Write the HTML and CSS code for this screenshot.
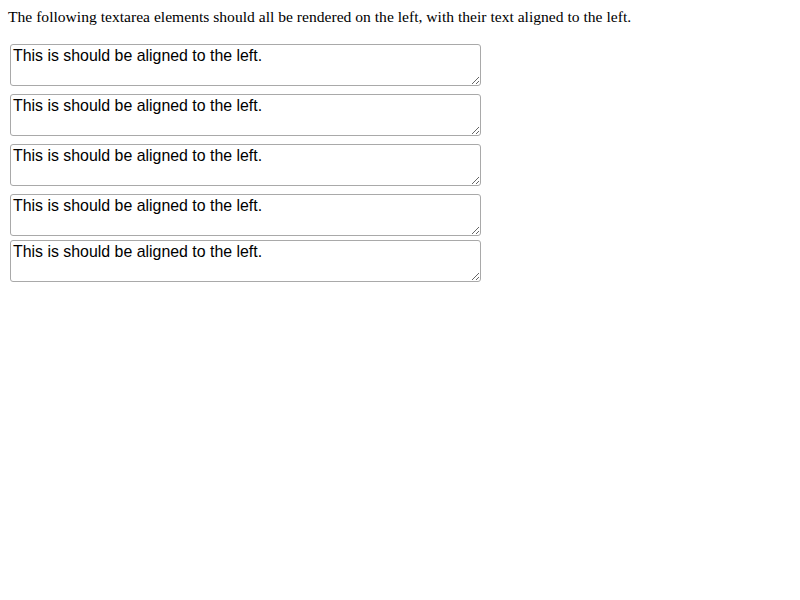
FILE: index.html
```html
<!DOCTYPE html>
<html>
<head>
<meta charset="utf-8">
<link rel="stylesheet" href="styles.css">
</head>
<body>
<p class="intro">The following textarea elements should all be rendered on the left, with their text aligned to the left.</p>
<div class="stack">
<textarea class="ta">This is should be aligned to the left.</textarea>
<textarea class="ta">This is should be aligned to the left.</textarea>
<textarea class="ta">This is should be aligned to the left.</textarea>
<textarea class="ta">This is should be aligned to the left.</textarea>
<textarea class="ta ta-close">This is should be aligned to the left.</textarea>
</div>
</body>
</html>
```
FILE: styles.css
```css
body {
  margin: 8px;
  font-family: "Liberation Serif", serif;
  font-size: 16px;
  background: #fff;
  color: #000;
}
.intro {
  margin: 0 0 18px;
  font-size: 15.6px;
  line-height: 18px;
}
.stack {
  display: flex;
  flex-direction: column;
  align-items: flex-start;
  gap: 8px;
  padding-left: 2px;
}
.ta {
  box-sizing: border-box;
  width: 471px;
  height: 42px;
  margin: 0;
  padding: 2px;
  border: 1px solid #a9a9a9;
  border-radius: 3px;
  font-family: "Liberation Sans", Arial, sans-serif;
  font-size: 15.9px;
  color: #000;
  text-align: left;
}
.ta-close {
  margin-top: -4px;
}
```
